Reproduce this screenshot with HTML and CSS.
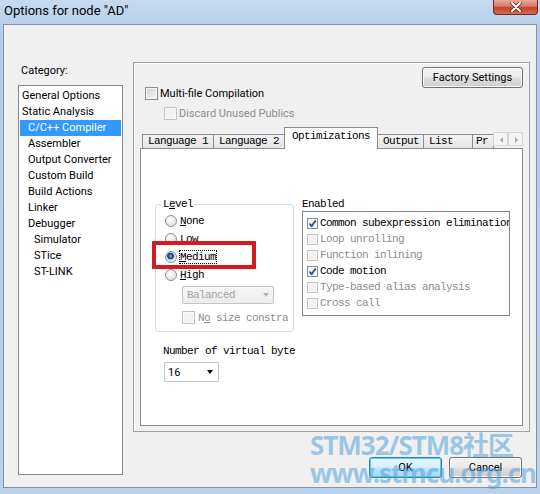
FILE: index.html
```html
<!DOCTYPE html>
<html lang="en">
<head>
    <meta charset="UTF-8">
    <title>Options for node "AD"</title>
    <link rel="stylesheet" href="styles.css">
</head>
<body>
    <div class="window">
        <div class="titlebar">
            <span class="title">Options for node "AD"</span>
            <span class="close">
                <svg width="12" height="10" viewBox="0 0 12 10">
                    <path d="M2 1 L10 9 M10 1 L2 9" stroke="#5a1d16" stroke-width="3.4" stroke-linecap="round"/>
                    <path d="M2 1 L10 9 M10 1 L2 9" stroke="#fff" stroke-width="2" stroke-linecap="round"/>
                </svg>
            </span>
        </div>

        <div class="client">
            <div class="category">
                <div class="cat-label">Category:</div>
                <ul class="cat-list">
                    <li>General Options</li>
                    <li>Static Analysis</li>
                    <li class="sub selected">C/C++ Compiler</li>
                    <li class="sub">Assembler</li>
                    <li class="sub">Output Converter</li>
                    <li class="sub">Custom Build</li>
                    <li class="sub">Build Actions</li>
                    <li class="sub">Linker</li>
                    <li class="sub">Debugger</li>
                    <li class="subsub">Simulator</li>
                    <li class="subsub">STice</li>
                    <li class="subsub">ST-LINK</li>
                </ul>
            </div>

            <div class="options">
                <div class="options-head">
                    <div class="head-checks">
                        <label class="check"><span class="box"></span>Multi-file Compilation</label>
                        <label class="check disabled"><span class="box"></span>Discard Unused Publics</label>
                    </div>
                    <button class="btn factory">Factory Settings</button>
                </div>

                <div class="tabs">
                    <span class="tab w-lang">Language 1</span>
                    <span class="tab w-lang">Language 2</span>
                    <span class="tab active">Optimizations</span>
                    <span class="tab w-output">Output</span>
                    <span class="tab w-list">List</span>
                    <span class="tab w-pr">Pr</span>
                    <span class="tab-scroll">
                        <span class="arrow left"></span>
                        <span class="arrow right"></span>
                    </span>
                </div>

                <div class="tab-page">
                    <div class="opt-row">
                        <fieldset class="level">
                            <legend>L<u>e</u>vel</legend>
                            <div class="radio"><span class="dot"></span><span><u>N</u>one</span></div>
                            <div class="radio"><span class="dot"></span><span>L<u>o</u>w</span></div>
                            <div class="radio"><span class="dot on"></span><span class="focus"><u>M</u>edium</span></div>
                            <div class="radio"><span class="dot"></span><span><u>H</u>igh</span></div>
                            <div class="combo disabled balanced">
                                <span>Balanced</span>
                                <span class="caret"></span>
                            </div>
                            <label class="check small disabled nosize"><span class="box"></span><span class="clip">N<u>o</u> size constraints</span></label>
                        </fieldset>

                        <div class="enabled">
                            <div class="enabled-label">Enabled</div>
                            <ul class="transforms">
                                <li><span class="box checked"></span>Common subexpression elimination</li>
                                <li class="off"><span class="box"></span>Loop unrolling</li>
                                <li class="off"><span class="box"></span>Function inlining</li>
                                <li><span class="box checked"></span>Code motion</li>
                                <li class="off"><span class="box"></span>Type-based alias analysis</li>
                                <li class="off"><span class="box"></span>Cross call</li>
                            </ul>
                        </div>
                    </div>

                    <div class="vbytes">
                        <div class="vbytes-label">Number of virtual byte</div>
                        <div class="combo vbytes-combo">
                            <span>16</span>
                            <span class="caret"></span>
                        </div>
                    </div>

                    <div class="marker"></div>
                </div>
            </div>

            <div class="buttons">
                <button class="btn default">OK</button>
                <button class="btn">Cancel</button>
            </div>
        </div>

        <div class="watermark">
            <div>STM32/STM8社区</div>
            <div>www.stmcu.org.cn</div>
        </div>
    </div>
</body>
</html>
```

FILE: styles.css
```css
body {
    margin: 0;
    font-family: Roboto, "Liberation Sans", sans-serif;
    font-size: 11px;
    color: #000;
    background: #b9d1ea;
}
.window {
    position: relative;
    width: 540px;
    height: 494px;
    display: flex;
    flex-direction: column;
    overflow: hidden;
    background: linear-gradient(#c6dbf1, #b4cdea 30px, #b9d1ea);
}

/* caption */
.titlebar {
    height: 24px;
    display: flex;
    justify-content: space-between;
    align-items: flex-start;
}
.title {
    font-size: 13px;
    line-height: 15px;
    padding: 3px 0 0 4px;
}
.close {
    width: 45px;
    height: 15px;
    margin-right: 2px;
    box-sizing: border-box;
    border: 1px solid #6e2a22;
    border-top: none;
    border-radius: 0 0 4px 4px;
    background: linear-gradient(#e6a99c, #d77a66 45%, #c4412c 55%, #d86a52);
    display: flex;
    align-items: center;
    justify-content: center;
}

/* dialog body */
.client {
    flex: 1;
    margin: 0 3px 6px;
    border: 1px solid #7f93ab;
    background: #f0f0f0;
    display: grid;
    grid-template-columns: 105px 397px;
    grid-template-rows: 370px auto;
    column-gap: 10px;
    padding: 37px 0 0 14px;
}
.category {
    grid-row: 1 / 3;
    display: flex;
    flex-direction: column;
}
.cat-label {
    line-height: 13px;
    margin: 2px 0 8px 3px;
}
.cat-list {
    list-style: none;
    margin: 0;
    padding: 2px 1px;
    height: 390px;
    box-sizing: border-box;
    border: 1px solid #828790;
    background: #fff;
}
.cat-list li {
    line-height: 16px;
    padding-left: 2px;
    white-space: nowrap;
}
.cat-list li.sub {
    padding-left: 8px;
}
.cat-list li.subsub {
    padding-left: 14px;
}
.cat-list li.selected {
    background: #3399ff;
    color: #fff;
}

.options {
    box-sizing: border-box;
    border: 1px solid #a0a0a0;
    box-shadow: inset 1px 1px 0 #fff;
    padding: 0 6px 5px;
    display: flex;
    flex-direction: column;
}
.options-head {
    height: 64px;
    display: flex;
    justify-content: space-between;
    align-items: flex-start;
}
.head-checks {
    padding: 23px 0 0 5px;
}

/* checkboxes */
.check {
    display: flex;
    align-items: center;
    height: 14px;
    gap: 2px;
    white-space: nowrap;
}
.check + .check {
    margin: 6px 0 0 19px;
}
.box {
    width: 13px;
    height: 13px;
    box-sizing: border-box;
    border: 1px solid #8e8f8f;
    background: linear-gradient(135deg, #cdd1d6, #f7f7f7);
    box-shadow: inset 0 0 0 1px #f4f4f4;
    flex: none;
}
.disabled {
    color: #8d8d8d;
}
.disabled .box,
.off .box {
    border-color: #c3c3c3;
    background: #f2f2f2;
    box-shadow: inset 0 0 0 1px #f8f8f8;
}
.box.checked {
    background: #f7f7f7 url("data:image/svg+xml,%3Csvg xmlns='http://www.w3.org/2000/svg' width='9' height='9'%3E%3Cpath d='M1.5 4.5 L3.6 7.2 L7.8 1.2' fill='none' stroke='%23254b86' stroke-width='1.7'/%3E%3C/svg%3E") center no-repeat;
}

/* buttons */
.btn {
    font: 11px Roboto, "Liberation Sans", sans-serif;
    color: #000;
    height: 21px;
    width: 73px;
    padding: 0;
    border: 1px solid #707070;
    border-radius: 3px;
    background: linear-gradient(#f2f2f2, #ebebeb 48%, #dddddd 52%, #cfcfcf);
    box-shadow: inset 0 0 0 1px #fbfbfb;
}
.btn.factory {
    width: 101px;
    margin-top: 4px;
}
.btn.default {
    border-color: #3c7fb1;
    background: linear-gradient(#eaf6fd, #d9f0fc 48%, #bee6fd 52%, #a7d9f5);
    box-shadow: inset 0 0 0 1px #48d2f7;
}

/* tab strip */
.tabs {
    height: 21px;
    display: flex;
    align-items: flex-end;
    padding-left: 2px;
    font-family: "Liberation Mono", monospace;
    letter-spacing: -0.6px;
}
.tab {
    height: 14px;
    line-height: 13px;
    box-sizing: border-box;
    padding-left: 5px;
    margin-right: -1px;
    border: 1px solid #898c95;
    border-bottom: none;
    background: linear-gradient(#f3f3f3, #e4e4e4);
    white-space: nowrap;
    overflow: hidden;
}
.w-lang { width: 72px; }
.w-output { width: 47px; }
.w-list { width: 50px; }
.w-pr { width: 22px; padding-left: 3px; }
.tab.active {
    width: 94px;
    height: 22px;
    line-height: 17px;
    padding-left: 7px;
    margin-bottom: -1px;
    background: #fff;
    position: relative;
    z-index: 1;
}
.tab-scroll {
    margin-left: auto;
    align-self: flex-start;
    margin-top: 5px;
    display: flex;
}
.arrow {
    width: 15px;
    height: 14px;
    box-sizing: border-box;
    border: 1px solid #d5d5d5;
    background: #f4f4f4;
    position: relative;
}
.arrow::after {
    content: "";
    position: absolute;
    top: 4px;
    left: 5px;
    border: 3px solid transparent;
}
.arrow.left::after {
    left: 3px;
    border-right: 3px solid #a6a6a6;
}
.arrow.right::after {
    left: 6px;
    border-left: 3px solid #a6a6a6;
}

.tab-page {
    flex: 1;
    position: relative;
    border: 1px solid #898c95;
    background: #fff;
    padding: 49px 0 0 14px;
    font-family: "Liberation Mono", monospace;
    letter-spacing: -0.6px;
}
.opt-row {
    display: flex;
    align-items: flex-start;
    gap: 8px;
}

/* Level group */
.level {
    width: 139px;
    box-sizing: border-box;
    margin: 0;
    padding: 2px 0 7px 9px;
    border: 1px solid #d5dfe5;
    border-radius: 3px;
}
.level legend {
    line-height: 12px;
    padding: 0 1px;
    margin-left: -3px;
}
.radio {
    height: 18px;
    display: flex;
    align-items: center;
    gap: 3px;
}
.dot {
    width: 12px;
    height: 12px;
    box-sizing: border-box;
    border: 1px solid #8e8f8f;
    border-radius: 50%;
    background: radial-gradient(circle at 40% 35%, #fff, #d6d6d6);
}
.dot.on {
    background: radial-gradient(circle at 45% 40%, #7fb6ea 0, #1f5d9b 2px, #0e355f 3px, #c9d3de 3.6px, #f3f5f7 6px);
}
.focus {
    outline: 1px dotted #000;
    outline-offset: 0;
}
.combo {
    display: flex;
    align-items: center;
    justify-content: space-between;
    box-sizing: border-box;
    border: 1px solid #c5c5c5;
    background: #fff;
}
.combo .caret {
    width: 0;
    height: 0;
    border: 3.5px solid transparent;
    border-top: 4px solid #000;
    border-bottom: none;
}
.balanced {
    width: 92px;
    height: 18px;
    margin: 2px 0 0 17px;
    padding: 0 4px 0 4px;
    border-radius: 2px;
    background: linear-gradient(#f6f6f6, #ececec);
    color: #a3a3a3;
}
.balanced .caret {
    border-top-color: #b4b4b4;
}
.check.small {
    height: 13px;
    gap: 3px;
}
.nosize {
    margin: 7px 0 0 17px;
}
.clip {
    width: 90px;
    overflow: hidden;
}

/* Enabled list */
.enabled-label {
    line-height: 12px;
}
.transforms {
    list-style: none;
    margin: 1px 0 0;
    padding: 3px 0 0 4px;
    width: 208px;
    height: 105px;
    box-sizing: border-box;
    border: 1px solid #828790;
    overflow: hidden;
}
.transforms li {
    height: 16px;
    display: flex;
    align-items: center;
    gap: 2px;
    white-space: nowrap;
}
.transforms .box {
    width: 11px;
    height: 11px;
}
.transforms li.off {
    color: #8d8d8d;
}

.vbytes {
    margin-top: 13px;
}
.vbytes-label {
    line-height: 12px;
    margin-left: 8px;
}
.vbytes-combo {
    width: 55px;
    height: 20px;
    margin: 5px 0 0 9px;
    padding: 0 5px 0 3px;
    font-family: Roboto, "Liberation Sans", sans-serif;
    letter-spacing: 0;
}

/* red highlight drawn over the Level group */
.marker {
    position: absolute;
    left: 11px;
    top: 92px;
    width: 104px;
    height: 28px;
    box-sizing: border-box;
    border: 4px solid #d71920;
}

.buttons {
    grid-column: 2;
    display: flex;
    justify-content: flex-end;
    gap: 7px;
    margin-top: 25px;
    padding-right: 8px;
    align-self: start;
}

.watermark {
    position: absolute;
    left: 310px;
    top: 431px;
    font: bold 26px "Noto Sans", "Noto Sans CJK SC", sans-serif;
    line-height: 28px;
    letter-spacing: -1px;
    color: rgba(80, 160, 220, 0.55);
    pointer-events: none;
}
```
